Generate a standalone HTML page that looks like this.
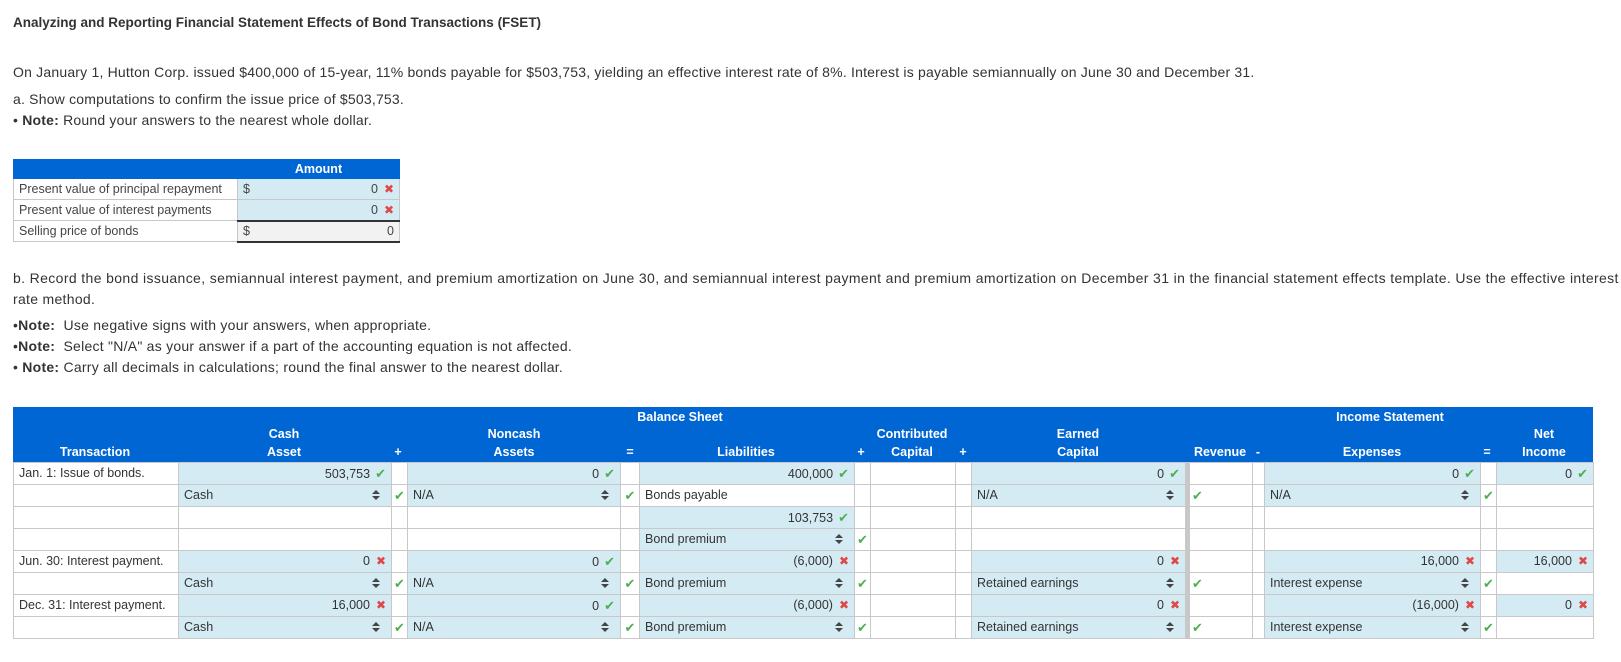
<!DOCTYPE html>
<html><head><meta charset="utf-8"><style>
*{box-sizing:border-box;margin:0;padding:0}
body{width:1621px;height:662px;background:#fff;font-family:"Liberation Sans",sans-serif;color:#333;position:relative;overflow:hidden}
.t{position:absolute;left:13px;font-size:14px;white-space:nowrap;line-height:18px}
b{font-weight:bold}
.hdr{position:absolute;left:13px;top:407px;width:1580px;height:55px;background:#0066d4;color:#fff;font-weight:bold;font-size:12.5px}
.hdr span{position:absolute;transform:translateX(-50%);white-space:nowrap;text-align:center;line-height:18px}
table.m{position:absolute;left:13px;top:462px;border-collapse:collapse;table-layout:fixed;font-size:12.5px}
table.m td{height:22px;border:1px solid #c8c8c8;padding:0 5px;white-space:nowrap;overflow:hidden;color:#333;line-height:15px}
.b{background:#d4ebf3}
.r{text-align:right}
.ok{color:#4caf50;font-size:13px;margin-left:5px}
.no{color:#e04848;font-size:12px;margin-left:6px}
.dd{float:right;margin-right:6px;margin-top:2px;width:8px;height:11px;position:relative}
.dd:before{content:"";position:absolute;left:0;top:0;border-left:4px solid transparent;border-right:4px solid transparent;border-bottom:4px solid #444}
.dd:after{content:"";position:absolute;left:0;top:6px;border-left:4px solid transparent;border-right:4px solid transparent;border-top:4px solid #444}
.ck{padding:0 1px!important;text-align:center}
td.th{background:#c8c8c8;padding:0!important;border-color:#c8c8c8}
table.s{position:absolute;left:13px;top:159px;border-collapse:collapse;table-layout:fixed;font-size:12.5px}
table.s td{height:21px;border:1px solid #c8c8c8;padding:0 5px;white-space:nowrap;color:#444}
</style></head><body>
<div class="t" style="top:14px;font-weight:bold;font-size:13.5px">Analyzing and Reporting Financial Statement Effects of Bond Transactions (FSET)</div>
<div class="t" style="top:63px;letter-spacing:0.2px">On January 1, Hutton Corp. issued $400,000 of 15-year, 11% bonds payable for $503,753, yielding an effective interest rate of 8%. Interest is payable semiannually on June 30 and December 31.</div>
<div class="t" style="top:90px;letter-spacing:0.2px">a. Show computations to confirm the issue price of $503,753.</div>
<div class="t" style="top:111px;letter-spacing:0.2px">• <b>Note:</b> Round your answers to the nearest whole dollar.</div>

<table class="s">
<colgroup><col style="width:224px"><col style="width:162px"></colgroup>
<tr><td style="background:#0066d4;border-color:#0066d4;height:19px"></td><td style="background:#0066d4;border-color:#0066d4;color:#fff;font-weight:bold;text-align:center;height:19px">Amount</td></tr>
<tr><td>Present value of principal repayment</td><td class="b">$<span style="float:right">0<span class="no">✖</span></span></td></tr>
<tr><td>Present value of interest payments</td><td class="b r">0<span class="no">✖</span></td></tr>
<tr><td>Selling price of bonds</td><td style="background:#f2f2f2;border-top:2px solid #333;border-bottom:2px solid #333">$<span style="float:right">0</span></td></tr>
</table>

<div class="t" style="top:269px;letter-spacing:0.37px">b. Record the bond issuance, semiannual interest payment, and premium amortization on June 30, and semiannual interest payment and premium amortization on December 31 in the financial statement effects template. Use the effective interest</div>
<div class="t" style="top:290px;letter-spacing:0.3px">rate method.</div>
<div class="t" style="top:316px;letter-spacing:0.25px">•<b>Note:</b>&nbsp; Use negative signs with your answers, when appropriate.</div>
<div class="t" style="top:337px;letter-spacing:0.25px">•<b>Note:</b>&nbsp; Select "N/A" as your answer if a part of the accounting equation is not affected.</div>
<div class="t" style="top:358px;letter-spacing:0.25px">• <b>Note:</b> Carry all decimals in calculations; round the final answer to the nearest dollar.</div>

<div class="hdr">
<span style="left:667px;top:1px">Balance Sheet</span>
<span style="left:1377px;top:1px">Income Statement</span>
<span style="left:82px;top:36px">Transaction</span>
<span style="left:271px;top:18px">Cash<br>Asset</span>
<span style="left:385px;top:36px">+</span>
<span style="left:501px;top:18px">Noncash<br>Assets</span>
<span style="left:617px;top:36px">=</span>
<span style="left:733px;top:36px">Liabilities</span>
<span style="left:848px;top:36px">+</span>
<span style="left:899px;top:18px">Contributed<br>Capital</span>
<span style="left:950px;top:36px">+</span>
<span style="left:1065px;top:18px">Earned<br>Capital</span>
<span style="left:1207px;top:36px">Revenue</span>
<span style="left:1245px;top:36px">-</span>
<span style="left:1359px;top:36px">Expenses</span>
<span style="left:1474px;top:36px">=</span>
<span style="left:1531px;top:18px">Net<br>Income</span>
</div>

<table class="m">
<colgroup><col style="width:165px"><col style="width:213px"><col style="width:16px"><col style="width:213px"><col style="width:19px"><col style="width:215px"><col style="width:16px"><col style="width:85px"><col style="width:16px"><col style="width:214px"><col style="width:4px"><col style="width:63px"><col style="width:12px"><col style="width:216px"><col style="width:16px"><col style="width:97px"></colgroup>
<tr><td>Jan. 1: Issue of bonds.</td><td class="b r">503,753<span class="ok">✔</span></td><td></td><td class="b r">0<span class="ok">✔</span></td><td></td><td class="b r">400,000<span class="ok">✔</span></td><td></td><td></td><td></td><td class="b r">0<span class="ok">✔</span></td><td class="th"></td><td></td><td></td><td class="b r">0<span class="ok">✔</span></td><td></td><td class="b r">0<span class="ok">✔</span></td></tr>
<tr><td></td><td class="b">Cash<span class="dd"></span></td><td class="ck"><span class="ok" style="margin:0">✔</span></td><td class="b">N/A<span class="dd"></span></td><td class="ck"><span class="ok" style="margin:0">✔</span></td><td>Bonds payable</td><td></td><td></td><td></td><td class="b">N/A<span class="dd"></span></td><td class="th"></td><td style="padding-left:2px"><span class="ok" style="margin:0">✔</span></td><td></td><td class="b">N/A<span class="dd"></span></td><td class="ck"><span class="ok" style="margin:0">✔</span></td><td></td></tr>
<tr><td></td><td></td><td></td><td></td><td></td><td class="b r">103,753<span class="ok">✔</span></td><td></td><td></td><td></td><td></td><td class="th"></td><td></td><td></td><td></td><td></td><td></td></tr>
<tr><td></td><td></td><td></td><td></td><td></td><td class="b">Bond premium<span class="dd"></span></td><td class="ck"><span class="ok" style="margin:0">✔</span></td><td></td><td></td><td></td><td class="th"></td><td></td><td></td><td></td><td></td><td></td></tr>
<tr><td>Jun. 30: Interest payment.</td><td class="b r">0<span class="no">✖</span></td><td></td><td class="b r">0<span class="ok">✔</span></td><td></td><td class="b r">(6,000)<span class="no">✖</span></td><td></td><td></td><td></td><td class="b r">0<span class="no">✖</span></td><td class="th"></td><td></td><td></td><td class="b r">16,000<span class="no">✖</span></td><td></td><td class="b r">16,000<span class="no">✖</span></td></tr>
<tr><td></td><td class="b">Cash<span class="dd"></span></td><td class="ck"><span class="ok" style="margin:0">✔</span></td><td class="b">N/A<span class="dd"></span></td><td class="ck"><span class="ok" style="margin:0">✔</span></td><td class="b">Bond premium<span class="dd"></span></td><td class="ck"><span class="ok" style="margin:0">✔</span></td><td></td><td></td><td class="b">Retained earnings<span class="dd"></span></td><td class="th"></td><td style="padding-left:2px"><span class="ok" style="margin:0">✔</span></td><td></td><td class="b">Interest expense<span class="dd"></span></td><td class="ck"><span class="ok" style="margin:0">✔</span></td><td></td></tr>
<tr><td>Dec. 31: Interest payment.</td><td class="b r">16,000<span class="no">✖</span></td><td></td><td class="b r">0<span class="ok">✔</span></td><td></td><td class="b r">(6,000)<span class="no">✖</span></td><td></td><td></td><td></td><td class="b r">0<span class="no">✖</span></td><td class="th"></td><td></td><td></td><td class="b r">(16,000)<span class="no">✖</span></td><td></td><td class="b r">0<span class="no">✖</span></td></tr>
<tr><td></td><td class="b">Cash<span class="dd"></span></td><td class="ck"><span class="ok" style="margin:0">✔</span></td><td class="b">N/A<span class="dd"></span></td><td class="ck"><span class="ok" style="margin:0">✔</span></td><td class="b">Bond premium<span class="dd"></span></td><td class="ck"><span class="ok" style="margin:0">✔</span></td><td></td><td></td><td class="b">Retained earnings<span class="dd"></span></td><td class="th"></td><td style="padding-left:2px"><span class="ok" style="margin:0">✔</span></td><td></td><td class="b">Interest expense<span class="dd"></span></td><td class="ck"><span class="ok" style="margin:0">✔</span></td><td></td></tr>
</table>
</body></html>
